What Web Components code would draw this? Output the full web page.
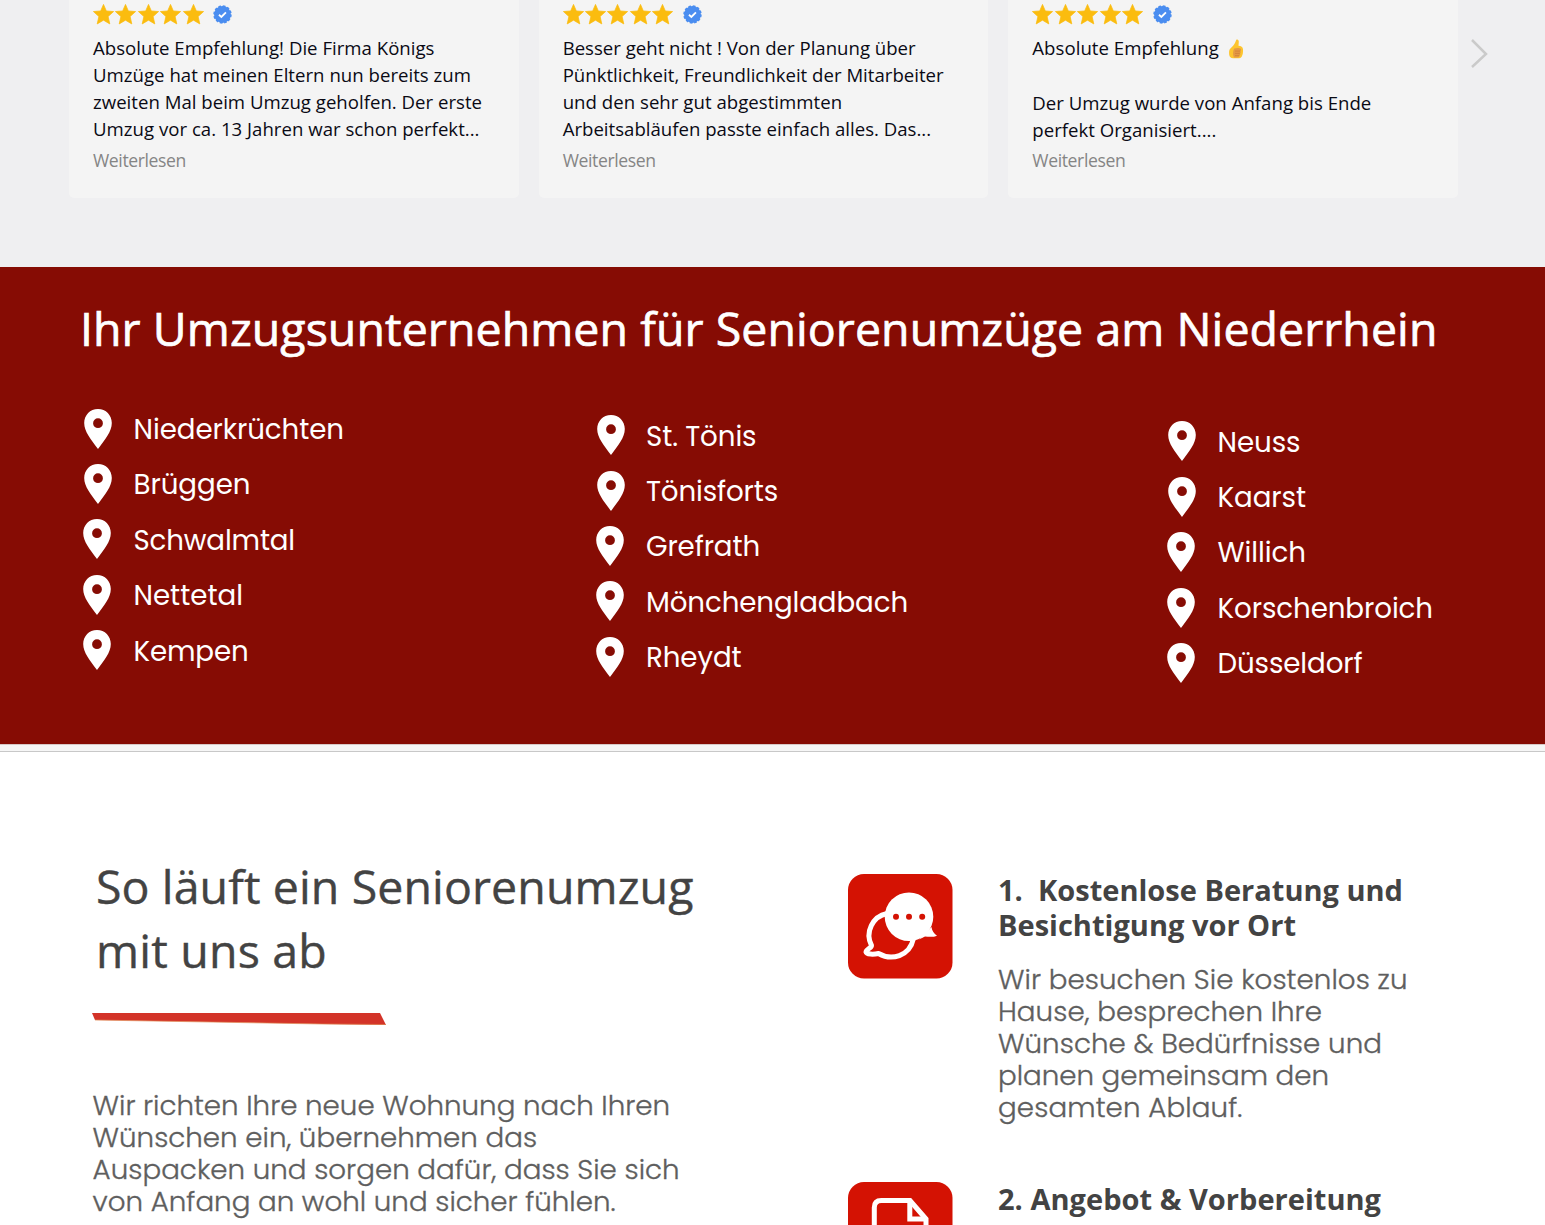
<!DOCTYPE html>
<html lang="de">
<head>
<meta charset="utf-8">
<title>Seniorenumzüge am Niederrhein</title>
<style>
  html, body {
    margin: 0;
    background: #fff;
  }

  body {
    width: 1545px;
    height: 1225px;
    overflow: hidden;
    font-family: "Open Sans", "Noto Sans", sans-serif;
  }
</style>
</head>
<body>
<review-strip>
  <review-card>
    <fit-text width="341.5">Absolute Empfehlung! Die Firma Königs</fit-text>
    <fit-text width="378">Umzüge hat meinen Eltern nun bereits zum</fit-text>
    <fit-text width="389">zweiten Mal beim Umzug geholfen. Der erste</fit-text>
    <fit-text width="386.5">Umzug vor ca. 13 Jahren war schon perfekt...</fit-text>
  </review-card>
  <review-card>
    <fit-text width="353">Besser geht nicht ! Von der Planung über</fit-text>
    <fit-text width="381">Pünktlichkeit, Freundlichkeit der Mitarbeiter</fit-text>
    <fit-text width="279.5">und den sehr gut abgestimmten</fit-text>
    <fit-text width="368.5">Arbeitsabläufen passte einfach alles. Das...</fit-text>
  </review-card>
  <review-card>
    <fit-text width="186.5">Absolute Empfehlung</fit-text><thumb-icon></thumb-icon>
    <fit-text width="339" style="margin-top: 30px">Der Umzug wurde von Anfang bis Ende</fit-text>
    <fit-text width="184">perfekt Organisiert....</fit-text>
  </review-card>
</review-strip>

<region-band>
  <fit-text slot="title" width="1357.5">Ihr Umzugsunternehmen für Seniorenumzüge am Niederrhein</fit-text>
  <place-list>
    <place-item width="210.5">Niederkrüchten</place-item>
    <place-item width="117">Brüggen</place-item>
    <place-item width="161.5" nudge>Schwalmtal</place-item>
    <place-item width="109.5" nudge>Nettetal</place-item>
    <place-item width="115" nudge>Kempen</place-item>
  </place-list>
  <place-list style="margin: 6.5px 0 0 512.5px">
    <place-item width="110.5">St. Tönis</place-item>
    <place-item width="132">Tönisforts</place-item>
    <place-item width="114" nudge>Grefrath</place-item>
    <place-item width="262" nudge>Mönchengladbach</place-item>
    <place-item width="95.5" nudge>Rheydt</place-item>
  </place-list>
  <place-list style="margin: 12.7px 0 0 1084px">
    <place-item width="83">Neuss</place-item>
    <place-item width="88.5">Kaarst</place-item>
    <place-item width="88.5" nudge>Willich</place-item>
    <place-item width="215.5" nudge>Korschenbroich</place-item>
    <place-item width="145" nudge>Düsseldorf</place-item>
  </place-list>
</region-band>

<process-section>
  <fit-text slot="title" width="597.5">So läuft ein Seniorenumzug</fit-text>
  <fit-text slot="title" width="231">mit uns ab</fit-text>
  <fit-text slot="intro" width="577.5">Wir richten Ihre neue Wohnung nach Ihren</fit-text>
  <fit-text slot="intro" width="444.5">Wünschen ein, übernehmen das</fit-text>
  <fit-text slot="intro" width="587">Auspacken und sorgen dafür, dass Sie sich</fit-text>
  <fit-text slot="intro" width="523">von Anfang an wohl und sicher fühlen.</fit-text>
  <process-step slot="steps" icon="chat">
    <fit-text slot="title" width="405">1.&nbsp; Kostenlose Beratung und</fit-text>
    <fit-text slot="title" width="298">Besichtigung vor Ort</fit-text>
    <fit-text width="409.5">Wir besuchen Sie kostenlos zu</fit-text>
    <fit-text width="324">Hause, besprechen Ihre</fit-text>
    <fit-text width="384">Wünsche &amp; Bedürfnisse und</fit-text>
    <fit-text width="331">planen gemeinsam den</fit-text>
    <fit-text width="244.5">gesamten Ablauf.</fit-text>
  </process-step>
  <process-step slot="steps" icon="document">
    <fit-text slot="title" width="383">2. Angebot &amp; Vorbereitung</fit-text>
  </process-step>
</process-section>

<script>
// One line of text, tracked so that it fills the given width.
class FitText extends HTMLElement {
  constructor () {
    super();
    this.attachShadow({ mode: 'open' });
    this.shadowRoot.innerHTML = `
      <style>
        :host { display: block; white-space: nowrap; }
        span { display: inline-block; vertical-align: top; }
      </style>
      <span><slot></slot></span>
    `;
  }

  connectedCallback () {
    requestAnimationFrame(() => this.fit());
    this.fit();
  }

  fit () {
    const span = this.shadowRoot.querySelector('span');
    const target = Number(this.getAttribute('width'));
    span.style.letterSpacing = '0';
    const natural = span.getBoundingClientRect().width;
    if (!target || !natural) return;
    span.style.letterSpacing = `${(target - natural) / this.textContent.length}px`;
  }
}

class StarRating extends HTMLElement {
  constructor () {
    super();
    this.attachShadow({ mode: 'open' });
    const star = '<svg class="star" viewBox="0 0 20 20"><path d="M10 .4l2.7 6.2 6.9.6-5.2 4.7L16 19l-6-3.6L4 19l1.6-7.1L.4 7.2l6.900-.6z"/></svg>';
    this.shadowRoot.innerHTML = `
      <style>
        :host { display: flex; align-items: center; gap: 1.4px; height: 20px; }
        .star { width: 21px; height: 21px; fill: #fbbc0f; stroke: #fbbc0f; stroke-width: .7; stroke-linejoin: round; }
        .badge { width: 19px; height: 19px; margin: 1px 0 0 8.3px; }
      </style>
      ${star.repeat(5)}
      <svg class="badge" viewBox="0 0 20 20">
        <circle cx="10" cy="10" r="8.9" fill="#4a8df0" stroke="#4a8df0" stroke-width="1.6" stroke-dasharray="2.8 1.86"/>
        <path d="M6.3 10.3l2.5 2.3 4.8-4.900" fill="none" stroke="#fff" stroke-width="1.9"/>
      </svg>
    `;
  }
}

class ThumbIcon extends HTMLElement {
  constructor () {
    super();
    this.attachShadow({ mode: 'open' });
    this.shadowRoot.innerHTML = `
      <style>
        :host { display: block; width: 16px; height: 20px; margin: -22px 0 2px 195.5px; }
        svg { display: block; }
      </style>
      <svg width="16" height="20" viewBox="0 0 16 20">
        <path d="M8.3.7c1.5-.7 2.6.4 2.5 2.1l-.3 4c2.6.3 4.4 1.2 4.5 3.5.2 3-.2 5.6-1.2 7.2-.7 1.3-2 1.8-4 1.800H5.200c-2.400 0-3.700-1.300-4-3.500C.9 12.900 1 11 2.200 9.700 4 7.900 6.600 5.700 7.200 3.600z" fill="#fdc52f"/>
        <path d="M6.2 9.600c2-.9 5.500-1 6.500.1.900 1 .3 2-.4 2.400.8.700.6 1.900-.2 2.300.6.800.2 1.800-.6 2.100.3 1.200-.8 2.100-2.400 2.100H6c-1.300-2-1.300-6.500.2-9z" fill="#e59a43"/>
        <path d="M7 12.100h5M7 14.400h4.800M7 16.600h4.200" stroke="#cf7d36" stroke-width=".7"/>
      </svg>
    `;
  }
}

class ReviewCard extends HTMLElement {
  constructor () {
    super();
    this.attachShadow({ mode: 'open' });
    this.shadowRoot.innerHTML = `
      <style>
        :host {
          display: block;
          box-sizing: border-box;
          height: 198px;
          padding: 4px 24px 0;
          border-radius: 0 0 5px 5px;
          background: #f4f4f4;
          color: #0a0a14;
          font-size: 18.6px;
          line-height: 27px;
        }
        .text { height: 108px; margin-top: 10px; }
        .more { margin-top: 5px; font-size: 17.6px; color: #858585; }
      </style>
      <star-rating></star-rating>
      <div class="text"><slot></slot></div>
      <fit-text class="more" width="93">Weiterlesen</fit-text>
    `;
  }
}

class ReviewStrip extends HTMLElement {
  constructor () {
    super();
    this.attachShadow({ mode: 'open' });
    this.shadowRoot.innerHTML = `
      <style>
        :host { display: flex; height: 267px; padding-left: 69px; background: #efeff1; }
        .cards { display: grid; grid-template-columns: repeat(3, 1fr); gap: 20px; width: 1389px; align-items: start; }
        svg { margin: 38px 0 0 12px; }
      </style>
      <div class="cards"><slot></slot></div>
      <svg width="20" height="32" viewBox="0 0 20 32">
        <path d="M2 2l14 14L2 29" fill="none" stroke="#cacaca" stroke-width="2.5"/>
      </svg>
    `;
  }
}

class PlaceItem extends HTMLElement {
  constructor () {
    super();
    this.attachShadow({ mode: 'open' });
    this.shadowRoot.innerHTML = `
      <style>
        :host { display: flex; align-items: center; height: 55.4px; line-height: 55.4px; }
        svg { flex: none; margin: -2px 21.5px 0 0; }
        :host([nudge]) svg { margin: -2px 22.5px 0 -1px; }
      </style>
      <svg width="28" height="40" viewBox="0 0 28 40">
        <path fill="#fff" fill-rule="evenodd" d="M14 0C6.100 0 .2 6.200.2 14c0 8.500 6.600 16.200 13.800 26 7.200-9.800 13.800-17.500 13.800-26C27.800 6.200 21.900 0 14 0zm0 9.300a4.900 4.900 0 1 1 0 9.800 4.900 4.900 0 0 1 0-9.800z"/>
      </svg>
      <fit-text width="${this.getAttribute('width')}"></fit-text>
    `;
    // Copied rather than slotted: fit-text counts its own characters.
    this.shadowRoot.querySelector('fit-text').textContent = this.textContent;
  }
}

class PlaceList extends HTMLElement {
  constructor () {
    super();
    this.attachShadow({ mode: 'open' });
    this.shadowRoot.innerHTML = `
      <style>
        :host { display: flex; flex-direction: column; grid-area: 1 / 1; justify-self: start; }
      </style>
      <slot></slot>
    `;
  }
}

class RegionBand extends HTMLElement {
  constructor () {
    super();
    this.attachShadow({ mode: 'open' });
    this.shadowRoot.innerHTML = `
      <style>
        :host {
          display: block;
          box-sizing: border-box;
          height: 485px;
          border-bottom: 1px solid #c8c8c8;
          background: #f6f6f6;
          color: #fff;
        }
        .band { box-sizing: border-box; height: 478px; padding: 29px 0 0 84px; background: #860c04; border-bottom: 1px solid #d8c8c6; }
        .title { margin-left: -4px; font-size: 46.5px; line-height: 64px; -webkit-text-stroke: .7px #fff; }
        .places { display: grid; margin-top: 42px; font: 27.7px Poppins, Inter, sans-serif; }
      </style>
      <div class="band">
        <div class="title"><slot name="title"></slot></div>
        <div class="places"><slot></slot></div>
      </div>
    `;
  }
}

const STEP_ICONS = {
  chat: `
    <path d="M39 39.5A22.3 22.3 0 0 0 23.5 71.500C24 73.500 18 75.500 18 78c.5 2.500 7.500 2.500 12.500 1.500 13 7.500 31 3 35-15" fill="none" stroke="#fff" stroke-width="5" stroke-linejoin="round"/>
    <circle cx="61" cy="42.7" r="24.3" fill="#fff"/>
    <path d="M83.5 53c.5 4 2.5 6.500 5.500 8.700-3 1.500-8 1.300-12 .8l-6 3z" fill="#fff"/>
    <g fill="#d41203"><circle cx="48" cy="42.7" r="3"/><circle cx="61" cy="42.7" r="3"/><circle cx="74.2" cy="42.7" r="3"/></g>`,
  document: `
    <path d="M26.3 90V25.500q0-7 7-7H62L78 37v53" fill="none" stroke="#fff" stroke-width="5"/>
    <path d="M61.8 18v19H78" fill="none" stroke="#fff" stroke-width="5"/>`
};

class ProcessStep extends HTMLElement {
  constructor () {
    super();
    this.attachShadow({ mode: 'open' });
    this.shadowRoot.innerHTML = `
      <style>
        :host { display: flex; gap: 45px; height: 309px; }
        svg { flex: none; margin-top: 2px; }
        :host([icon="document"]) svg { margin-top: 1.4px; }
        .title { font-size: 29px; line-height: 35px; font-weight: 700; color: #434343; }
        .text { margin-top: 22px; font: 300 27.7px/32px Poppins, Inter, sans-serif; color: #5e5e5e; -webkit-text-stroke: .35px #5e5e5e; }
      </style>
      <svg width="105" height="105" viewBox="0 0 105 105">
        <rect width="104.5" height="104.5" rx="16" fill="#d41203"/>
        ${STEP_ICONS[this.getAttribute('icon')]}
      </svg>
      <div>
        <div class="title"><slot name="title"></slot></div>
        <div class="text"><slot></slot></div>
      </div>
    `;
  }
}

class ProcessSection extends HTMLElement {
  constructor () {
    super();
    this.attachShadow({ mode: 'open' });
    this.shadowRoot.innerHTML = `
      <style>
        :host { display: flex; height: 473px; overflow: hidden; }
        .intro { width: 756px; padding: 102px 0 0 92px; }
        .title { padding-left: 4px; font-size: 46.5px; line-height: 64px; color: #434343; -webkit-text-stroke: .4px #434343; }
        svg { display: block; margin-top: 31px; }
        .text { margin: 65px 0 0 .6px; font: 300 27.7px/32px Poppins, Inter, sans-serif; color: #5e5e5e; -webkit-text-stroke: .35px #5e5e5e; }
        .steps { padding-top: 120px; }
      </style>
      <div class="intro">
        <div class="title"><slot name="title"></slot></div>
        <svg width="294" height="12" viewBox="0 0 294 12">
          <path d="M0 0h288l6 12-64-1L3 7z" fill="#d33328"/>
          <path d="M3 7l227 4 64 .5" fill="none" stroke="#e08a55" stroke-width=".7"/>
        </svg>
        <div class="text"><slot name="intro"></slot></div>
      </div>
      <div class="steps"><slot name="steps"></slot></div>
    `;
  }
}

// Containers first: lines are measured once their surroundings have set the font.
customElements.define('star-rating', StarRating);
customElements.define('thumb-icon', ThumbIcon);
customElements.define('review-card', ReviewCard);
customElements.define('review-strip', ReviewStrip);
customElements.define('place-item', PlaceItem);
customElements.define('place-list', PlaceList);
customElements.define('region-band', RegionBand);
customElements.define('process-step', ProcessStep);
customElements.define('process-section', ProcessSection);
customElements.define('fit-text', FitText);
</script>
</body>
</html>
